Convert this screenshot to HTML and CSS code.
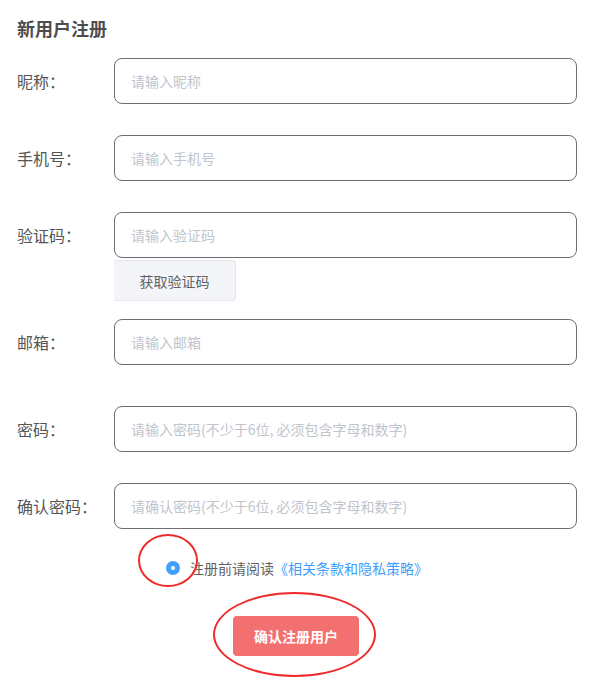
FILE: index.html
```html
<!DOCTYPE html>
<html lang="zh-CN">
<head>
<meta charset="utf-8">
<title>新用户注册</title>
<link rel="stylesheet" href="styles.css">
</head>
<body>
<div class="page">
  <h1 class="title">新用户注册</h1>
  <form class="form">
    <div class="field">
      <label class="label">昵称：</label>
      <div class="control"><input class="input" type="text" placeholder="请输入昵称"></div>
    </div>
    <div class="field">
      <label class="label">手机号：</label>
      <div class="control"><input class="input" type="text" placeholder="请输入手机号"></div>
    </div>
    <div class="field field-code">
      <label class="label">验证码：</label>
      <div class="control">
        <input class="input" type="text" placeholder="请输入验证码">
        <button type="button" class="code-btn">获取验证码</button>
      </div>
    </div>
    <div class="field field-wide">
      <label class="label">邮箱：</label>
      <div class="control"><input class="input" type="text" placeholder="请输入邮箱"></div>
    </div>
    <div class="field">
      <label class="label">密码：</label>
      <div class="control"><input class="input" type="password" placeholder="请输入密码(不少于6位, 必须包含字母和数字)"></div>
    </div>
    <div class="field field-last">
      <label class="label">确认密码：</label>
      <div class="control"><input class="input" type="password" placeholder="请确认密码(不少于6位, 必须包含字母和数字)"></div>
    </div>
    <div class="agree">
      <span class="radio-wrap"><span class="radio"></span><span class="mark mark-radio"></span></span>
      <span class="agree-text">注册前请阅读</span><a class="agree-link" href="#">《相关条款和隐私策略》</a>
    </div>
    <div class="submit-row">
      <span class="submit-wrap">
        <button type="button" class="submit">确认注册用户</button>
        <span class="mark mark-submit"></span>
      </span>
    </div>
  </form>
</div>
</body>
</html>
```
FILE: styles.css
```css
* { box-sizing: border-box; }
body {
  margin: 0;
  background: #fff;
  font-family: "Noto Sans CJK SC", "Noto Sans", sans-serif;
}
.page {
  padding: 16px 19px 28px 17px;
}
.title {
  margin: 0 0 18px;
  font-size: 18px;
  line-height: 24px;
  font-weight: bold;
  color: #4d4d4d;
}
.field {
  display: flex;
  align-items: flex-start;
  margin-bottom: 31px;
}
.field-code { margin-bottom: 18px; }
.field-wide { margin-bottom: 41px; }
.field-last { margin-bottom: 29px; }
.label {
  flex: none;
  width: 97px;
  line-height: 46px;
  font-size: 16px;
  color: #555;
}
.control {
  flex: 1;
  display: flex;
  flex-direction: column;
  align-items: flex-start;
}
.input {
  width: 100%;
  height: 46px;
  border: 1px solid #6e6e6e;
  border-radius: 8px;
  padding: 0 16px;
  font-family: inherit;
  font-size: 14px;
  color: #333;
  outline: none;
  background: #fff;
}
.input::placeholder { color: #c0c4cc; }
.code-btn {
  margin-top: 2px;
  width: 122px;
  height: 41px;
  border: 1px solid #e4e7ed;
  border-left: none;
  border-radius: 0 4px 4px 0;
  background: #f4f5f8;
  font-family: inherit;
  font-size: 14px;
  color: #606266;
  padding: 0;
}
.agree {
  display: flex;
  align-items: center;
  justify-content: center;
  height: 20px;
  font-size: 14px;
  line-height: 20px;
}
.radio-wrap {
  position: relative;
  display: inline-block;
  width: 14px;
  height: 14px;
  margin-right: 10px;
}
.radio {
  display: block;
  width: 14px;
  height: 14px;
  border-radius: 50%;
  background: #409eff;
  position: relative;
}
.radio::after {
  content: "";
  position: absolute;
  left: 5px;
  top: 5px;
  width: 4px;
  height: 4px;
  border-radius: 50%;
  background: #fff;
}
.agree-text { color: #606266; }
.agree-link { color: #409eff; text-decoration: none; }
.mark {
  position: absolute;
  border: 2px solid #ee2c2c;
  border-radius: 50%;
  pointer-events: none;
}
.mark-radio {
  left: -28px;
  top: -27px;
  width: 60px;
  height: 53px;
}
.submit-row {
  display: flex;
  justify-content: center;
  margin-top: 38px;
  padding-right: 2px;
}
.submit-wrap {
  position: relative;
  display: inline-block;
}
.submit {
  display: block;
  width: 126px;
  height: 40px;
  border: none;
  border-radius: 4px;
  background: #f37070;
  color: #fff;
  font-family: inherit;
  font-size: 14px;
  font-weight: bold;
  padding: 0;
}
.mark-submit {
  left: -20px;
  top: -24px;
  width: 163px;
  height: 85px;
}
```
